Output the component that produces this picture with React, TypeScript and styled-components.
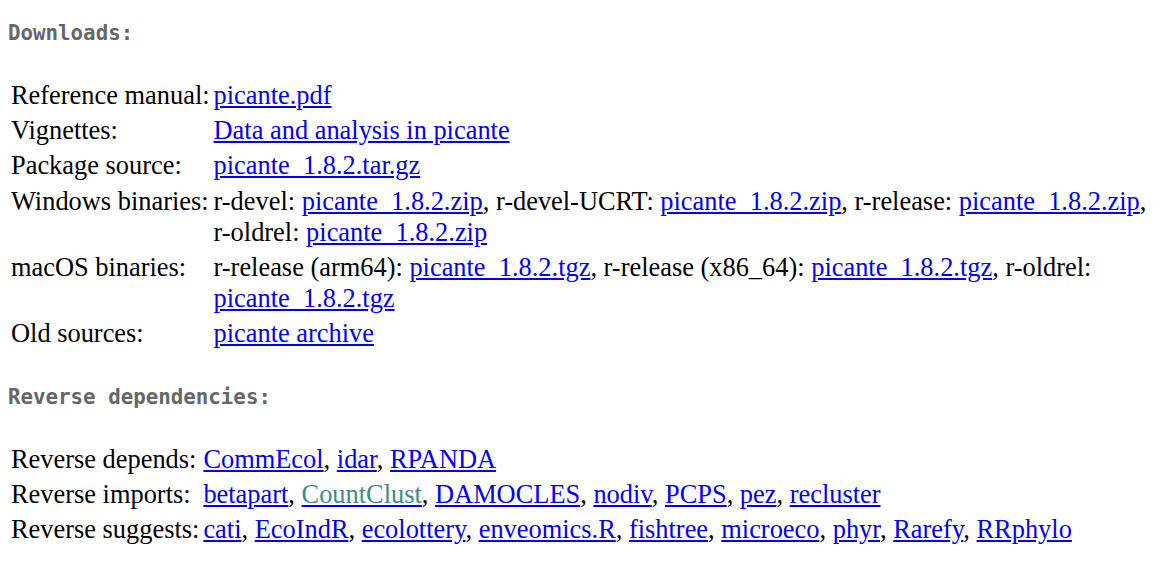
import React from "react";
import styled, { createGlobalStyle } from "styled-components";

const Global = createGlobalStyle`
  html, body { margin: 0; padding: 0; background: #ffffff; }
  body { font-family: "Liberation Serif", "Times New Roman", serif; color: #000; }
`;

const Page = styled.div`
  padding: 8px;
`;

const Heading = styled.h4<{ $first?: boolean }>`
  font-family: "DejaVu Sans Mono", "Liberation Mono", monospace;
  font-size: 20.8px;
  line-height: 24px;
  font-weight: bold;
  color: #666666;
  margin: ${(p) => (p.$first ? "13px 0 32px 0" : "32px 0 32px 0")};
`;

const Table = styled.table`
  border-collapse: separate;
  border-spacing: 2px;
  font-size: 26.4px;
  line-height: 31.2px;
`;

const LabelCell = styled.td`
  padding: 1px;
  vertical-align: top;
  white-space: nowrap;
`;

const ValueCell = styled.td`
  padding: 1px;
  vertical-align: top;
`;

const Link = styled.a`
  color: #0000ee;
  text-decoration: underline;
`;

const Visited = styled.span`
  color: #3b8b8d;
`;

type Item = { pre?: string; link: string; visited?: boolean };

const List: React.FC<{ items: Item[] }> = ({ items }) => (
  <>
    {items.map((it, i) => (
      <React.Fragment key={i}>
        {i > 0 ? ", " : ""}
        {it.pre ? it.pre + " " : ""}
        <Link href="#">{it.visited ? <Visited>{it.link}</Visited> : it.link}</Link>
      </React.Fragment>
    ))}
  </>
);

const zip = "picante_1.8.2.zip";
const tgz = "picante_1.8.2.tgz";

export default function App() {
  return (
    <Page>
      <Global />
      <Heading $first>Downloads:</Heading>
      <Table>
        <tbody>
          <tr>
            <LabelCell>Reference manual:</LabelCell>
            <ValueCell>
              <Link href="#">picante.pdf</Link>
            </ValueCell>
          </tr>
          <tr>
            <LabelCell>Vignettes:</LabelCell>
            <ValueCell>
              <Link href="#">Data and analysis in picante</Link>
            </ValueCell>
          </tr>
          <tr>
            <LabelCell>Package&nbsp;source:</LabelCell>
            <ValueCell>
              <Link href="#">picante_1.8.2.tar.gz</Link>
            </ValueCell>
          </tr>
          <tr>
            <LabelCell>Windows&nbsp;binaries:</LabelCell>
            <ValueCell>
              <List
                items={[
                  { pre: "r-devel:", link: zip },
                  { pre: "r-devel-UCRT:", link: zip },
                  { pre: "r-release:", link: zip },
                  { pre: "r-oldrel:", link: zip },
                ]}
              />
            </ValueCell>
          </tr>
          <tr>
            <LabelCell>macOS&nbsp;binaries:</LabelCell>
            <ValueCell>
              <List
                items={[
                  { pre: "r-release (arm64):", link: tgz },
                  { pre: "r-release (x86_64):", link: tgz },
                  { pre: "r-oldrel:", link: tgz },
                ]}
              />
            </ValueCell>
          </tr>
          <tr>
            <LabelCell>Old&nbsp;sources:</LabelCell>
            <ValueCell>
              <Link href="#">picante archive</Link>
            </ValueCell>
          </tr>
        </tbody>
      </Table>
      <Heading>Reverse dependencies:</Heading>
      <Table>
        <tbody>
          <tr>
            <LabelCell>Reverse&nbsp;depends:</LabelCell>
            <ValueCell>
              <List items={[{ link: "CommEcol" }, { link: "idar" }, { link: "RPANDA" }]} />
            </ValueCell>
          </tr>
          <tr>
            <LabelCell>Reverse&nbsp;imports:</LabelCell>
            <ValueCell>
              {" "}
              <List
                items={[
                  { link: "betapart" },
                  { link: "CountClust", visited: true },
                  { link: "DAMOCLES" },
                  { link: "nodiv" },
                  { link: "PCPS" },
                  { link: "pez" },
                  { link: "recluster" },
                ]}
              />
            </ValueCell>
          </tr>
          <tr>
            <LabelCell>Reverse&nbsp;suggests:</LabelCell>
            <ValueCell>
              <List
                items={[
                  { link: "cati" },
                  { link: "EcoIndR" },
                  { link: "ecolottery" },
                  { link: "enveomics.R" },
                  { link: "fishtree" },
                  { link: "microeco" },
                  { link: "phyr" },
                  { link: "Rarefy" },
                  { link: "RRphylo" },
                ]}
              />
            </ValueCell>
          </tr>
        </tbody>
      </Table>
    </Page>
  );
}
